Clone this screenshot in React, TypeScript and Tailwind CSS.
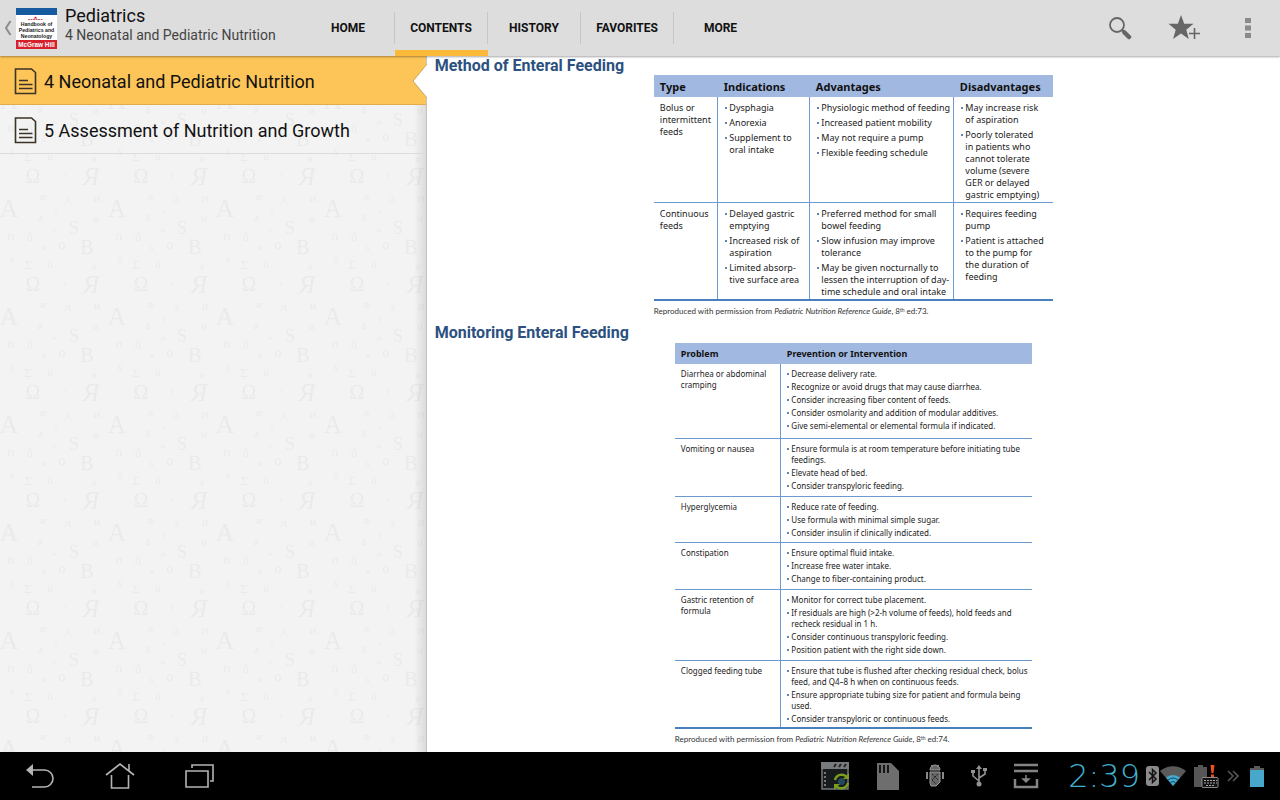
import type { ReactNode } from "react";

const tabs = ["HOME", "CONTENTS", "HISTORY", "FAVORITES", "MORE"];

const chapters = ["4 Neonatal and Pediatric Nutrition", "5 Assessment of Nutrition and Growth"];

const glyphs: [string, number, number, number][] = [
  ["A", 9, 61, 25],
  ["Ω", 33, 27, 20],
  ["Я", 91, 29, 25],
  ["B", 87, 98, 20],
  ["S", 74, 78, 18],
  ["Σ", 28, 113, 13],
  ["Σ", 28, 5, 13],
  ["æ", 43, 44, 11],
  ["д", 68, 46, 11],
  ["и", 97, 46, 13],
  ["ū", 50, 4, 11],
  ["ū", 50, 112, 11],
  ["o", 62, 93, 14],
  ["ŏ", 30, 85, 12],
  ["п", 11, 84, 13],
  ["a", 40, 65, 12],
  ["ж", 55, 76, 7],
  ["к", 44, 94, 8],
  ["и", 96, 66, 11],
  ["s", 12, 107, 12],
  ["я", 94, 6, 11],
  ["т", 56, 58, 8],
  ["г", 65, 22, 8],
];

const feedingMethods = [
  {
    type: ["Bolus or", "intermittent", "feeds"],
    cells: [
      [["Dysphagia"], ["Anorexia"], ["Supplement to", "oral intake"]],
      [
        ["Physiologic method of feeding"],
        ["Increased patient mobility"],
        ["May not require a pump"],
        ["Flexible feeding schedule"],
      ],
      [
        ["May increase risk", "of aspiration"],
        ["Poorly tolerated", "in patients who", "cannot tolerate", "volume (severe", "GER or delayed", "gastric emptying)"],
      ],
    ],
  },
  {
    type: ["Continuous", "feeds"],
    cells: [
      [
        ["Delayed gastric", "emptying"],
        ["Increased risk of", "aspiration"],
        ["Limited absorp-", "tive surface area"],
      ],
      [
        ["Preferred method for small", "bowel feeding"],
        ["Slow infusion may improve", "tolerance"],
        ["May be given nocturnally to", "lessen the interruption of day-", "time schedule and oral intake"],
      ],
      [
        ["Requires feeding", "pump"],
        ["Patient is attached", "to the pump for", "the duration of", "feeding"],
      ],
    ],
  },
];

const problems = [
  {
    height: "h-[74px]",
    name: ["Diarrhea or abdominal", "cramping"],
    steps: [
      ["Decrease delivery rate."],
      ["Recognize or avoid drugs that may cause diarrhea."],
      ["Consider increasing fiber content of feeds."],
      ["Consider osmolarity and addition of modular additives."],
      ["Give semi-elemental or elemental formula if indicated."],
    ],
  },
  {
    height: "h-[58px]",
    name: ["Vomiting or nausea"],
    steps: [
      ["Ensure formula is at room temperature before initiating tube", "feedings."],
      ["Elevate head of bed."],
      ["Consider transpyloric feeding."],
    ],
  },
  {
    height: "h-[46px]",
    name: ["Hyperglycemia"],
    steps: [
      ["Reduce rate of feeding."],
      ["Use formula with minimal simple sugar."],
      ["Consider insulin if clinically indicated."],
    ],
  },
  {
    height: "h-[47px]",
    name: ["Constipation"],
    steps: [["Ensure optimal fluid intake."], ["Increase free water intake."], ["Change to fiber-containing product."]],
  },
  {
    height: "h-[71px]",
    name: ["Gastric retention of", "formula"],
    steps: [
      ["Monitor for correct tube placement."],
      ["If residuals are high (>2-h volume of feeds), hold feeds and", "recheck residual in 1 h."],
      ["Consider continuous transpyloric feeding."],
      ["Position patient with the right side down."],
    ],
  },
  {
    height: "h-[68px]",
    name: ["Clogged feeding tube"],
    steps: [
      ["Ensure that tube is flushed after checking residual check, bolus", "feed, and Q4–8 h when on continuous feeds."],
      ["Ensure appropriate tubing size for patient and formula being", "used."],
      ["Consider transpyloric or continuous feeds."],
    ],
  },
];

function Lines({ lines }: { lines: string[] }) {
  return (
    <>
      {lines.map((line) => (
        <span key={line} className="block whitespace-nowrap">
          {line}
        </span>
      ))}
    </>
  );
}

function Bullets({ items, gap }: { items: string[][]; gap: string }) {
  return (
    <ul className={`flex flex-col ${gap}`}>
      {items.map((lines) => (
        <li key={lines[0]} className="flex gap-[2px]">
          <span className="mt-[5px] size-[2px] shrink-0 bg-[#5f82b4]" />
          <div>
            <Lines lines={lines} />
          </div>
        </li>
      ))}
    </ul>
  );
}

function Credit({ page }: { page: string }) {
  return (
    <p className="mt-1 font-[Lato,sans-serif] text-[8px] leading-[12px] text-[#333]">
      Reproduced with permission from <em>Pediatric Nutrition Reference Guide</em>, 8
      <sup className="text-[5px]">th</sup> ed:{page}.
    </p>
  );
}

function IconButton({ label, className, children }: { label: string; className: string; children: ReactNode }) {
  return (
    <button type="button" aria-label={label} className={`flex items-center justify-center ${className}`}>
      {children}
    </button>
  );
}

function BookCover() {
  return (
    <svg width="41" height="41" viewBox="0 0 41 41" role="img" aria-label="Handbook of Pediatrics and Neonatology">
      <rect width="41" height="41" fill="#fff" />
      <rect width="41" height="7" fill="#165a9f" />
      <rect y="32" width="41" height="9" fill="#d5212c" />
      <path d="M19.500 8.500l2 2h-4z" fill="#d5212c" />
      <path d="M12 11.500h15" stroke="#c4656a" strokeWidth="1" strokeDasharray="2 .5" />
      <g fontFamily="Liberation Sans, sans-serif" fontWeight="700" textAnchor="middle" fill="#222">
        <text x="20.500" y="18" fontSize="5.200">Handbook of</text>
        <text x="20.500" y="24" fontSize="5.200">Pediatrics and</text>
        <text x="20.500" y="30" fontSize="5.200">Neonatology</text>
        <text x="20.500" y="39" fontSize="6.400" fill="#fff">McGraw Hill</text>
      </g>
    </svg>
  );
}

function PageIcon() {
  return (
    <svg width="23" height="27" viewBox="0 0 23 27" fill="none" stroke="#3b3326" strokeWidth="1.600" className="shrink-0">
      <path d="M1.500 1H17.500L21.500 4.500v21H1.500z" />
      <path d="M5 12.500h9M5 16.500h13.500M5 20.500h13.500" />
    </svg>
  );
}

function Header() {
  return (
    <header className="relative z-10 flex h-14 shrink-0 bg-[#dddddd] shadow-[0_1px_2px_rgba(0,0,0,0.35)]">
      <div className="flex w-[302px] shrink-0 items-center">
        <IconButton label="Back" className="w-4">
          <svg width="8" height="16" viewBox="0 0 8 16" fill="none" stroke="#8c8c8c" strokeWidth="2">
            <path d="M6.500 1L2 8l4.500 7" />
          </svg>
        </IconButton>
        <BookCover />
        <div className="ml-2 pb-[6px] whitespace-nowrap">
          <h1 className="text-[18px] leading-[20px] text-[#111]">Pediatrics</h1>
          <p className="text-[14px] leading-[18px] text-[#444]">4 Neonatal and Pediatric Nutrition</p>
        </div>
      </div>
      <nav className="flex">
        {tabs.map((tab) => (
          <button
            key={tab}
            type="button"
            className={`flex w-[93px] items-center text-[12px] font-bold text-[#111] ${
              tab === "CONTENTS" ? "border-b-[6px] border-[#fbb93a] pt-[6px]" : ""
            }`}
          >
            <span
              className={`flex h-8 flex-1 items-center justify-center ${tab === "MORE" ? "" : "border-r border-[#c6c6c6]"}`}
            >
              {tab}
            </span>
          </button>
        ))}
      </nav>
      <div className="ml-auto flex">
        <IconButton label="Search" className="w-16">
          <svg width="24" height="24" viewBox="0 0 24 24" fill="none" stroke="#666">
            <circle cx="9" cy="9" r="7" strokeWidth="1.800" />
            <path d="M14 14l3 3" strokeWidth="2.500" />
            <path d="M16.500 16.500l4.500 4.500" strokeWidth="4.500" strokeLinecap="round" />
          </svg>
        </IconButton>
        <IconButton label="Add to favorites" className="w-16">
          <svg width="32" height="28" viewBox="0 0 32 28">
            <path d="M13 1l3.200 8.800h9.300l-7.200 5.900 2.500 9.300-7.800-5.500-7.900 5.500 2.600-9.300L.5 9.800h9.400z" fill="#666" />
            <path d="M26.500 14v10.500M21 19.500h11" stroke="#ddd" strokeWidth="4" />
            <path d="M26.500 14v11M21 19.500h11" stroke="#666" strokeWidth="1.600" />
          </svg>
        </IconButton>
        <IconButton label="More options" className="w-16">
          <svg width="6" height="20" viewBox="0 0 6 20" fill="#8a8a8a">
            <path d="M0 0h6v5H0zM0 7.500h6v5H0zM0 15h6v5H0z" />
          </svg>
        </IconButton>
      </div>
    </header>
  );
}

function Sidebar() {
  return (
    <aside className="relative w-1/3 shrink-0 border-r border-[#c4c4c4] bg-[#f3f3f3]">
      <svg aria-hidden="true" className="absolute inset-0 h-full w-full">
        <defs>
          <pattern id="letters" y="100" width="108" height="108" patternUnits="userSpaceOnUse">
            <g fontFamily="Liberation Serif, serif" textAnchor="middle" fill="#eaeaea">
              {glyphs.map(([glyph, x, y, size]) => (
                <text key={`${glyph}-${x}-${y}`} x={x} y={y} fontSize={size} fontStyle={glyph === "Я" ? "italic" : "normal"}>
                  {glyph}
                </text>
              ))}
            </g>
          </pattern>
        </defs>
        <rect width="100%" height="100%" fill="url(#letters)" />
      </svg>
      <div className="absolute inset-y-0 right-0 w-3 bg-linear-to-r from-transparent to-black/10" />
      <ul className="relative">
        {chapters.map((chapter, index) => (
          <li
            key={chapter}
            className={`relative h-[49px] border-b ${index === 0 ? "border-[#e0ad48] bg-[#fdc558]" : "border-[#dcdcdc]"}`}
          >
            <a
              href="#chapter"
              className="flex h-full items-center gap-[7px] pt-[2px] pl-[14px] text-[18px] whitespace-nowrap text-[#111]"
            >
              <PageIcon />
              {chapter}
            </a>
            {index === 0 && (
              <svg width="15" height="34" viewBox="0 0 15 34" className="absolute top-2 -right-px">
                <path d="M15 0L1 17l14 17z" fill="#fff" />
                <path d="M15 0L1 17l14 17" fill="none" stroke="#c9a45a" strokeWidth="1" />
              </svg>
            )}
          </li>
        ))}
      </ul>
    </aside>
  );
}

const headingClass = "pl-2 text-[16px] leading-[18px] font-bold text-[#2c5180]";

function Article() {
  return (
    <article className="min-w-0 flex-1 bg-white pt-px">
      <h2 className={headingClass}>Method of Enteral Feeding</h2>
      <div className="mx-auto w-[399px] font-['Noto_Sans','Open_Sans',sans-serif] text-[#222]">
        <table className="w-full table-fixed border-collapse border-b-2 border-[#4a7fbd] text-left text-[9px] leading-[12px]">
          <colgroup>
            <col className="w-[64px]" />
            <col className="w-[92px]" />
            <col className="w-[144px]" />
            <col />
          </colgroup>
          <thead className="bg-[#a1b8e0] text-[11px] text-[#111]">
            <tr className="h-[22px]">
              {["Type", "Indications", "Advantages", "Disadvantages"].map((title) => (
                <th key={title} className="pt-px pl-[6px] font-bold">
                  {title}
                </th>
              ))}
            </tr>
          </thead>
          <tbody>
            {feedingMethods.map((method) => (
              <tr key={method.type[0]} className="border-b border-[#6d9bd0] align-top last:border-b-0">
                <td className="pt-[5px] pl-[6px]">
                  <Lines lines={method.type} />
                </td>
                {method.cells.map((items) => (
                  <td key={items[0][0]} className="border-l border-[#6d9bd0] pt-[5px] pb-px pl-[7px]">
                    <Bullets items={items} gap="gap-[3px]" />
                  </td>
                ))}
              </tr>
            ))}
          </tbody>
        </table>
        <Credit page="73" />
      </div>
      <h2 className={`mt-[7px] ${headingClass}`}>Monitoring Enteral Feeding</h2>
      <div className="mx-auto mt-px w-[357px] font-['Noto_Sans','Open_Sans',sans-serif] text-[#222]">
        <table className="w-full table-fixed border-collapse border-b-2 border-[#4a7fbd] text-left text-[8px] leading-[11px]">
          <colgroup>
            <col className="w-[106px]" />
            <col />
          </colgroup>
          <thead className="bg-[#a1b8e0] text-[9px] text-[#111]">
            <tr className="h-[21px]">
              <th className="pl-[6px] font-bold">Problem</th>
              <th className="pl-[6px] font-bold">Prevention or Intervention</th>
            </tr>
          </thead>
          <tbody>
            {problems.map((problem) => (
              <tr
                key={problem.name[0]}
                className={`border-b border-[#6d9bd0] align-top last:border-b-0 ${problem.height}`}
              >
                <td className="pt-1 pl-[6px]">
                  <Lines lines={problem.name} />
                </td>
                <td className="border-l border-[#6d9bd0] pt-1 pl-[6px]">
                  <Bullets items={problem.steps} gap="gap-[2px]" />
                </td>
              </tr>
            ))}
          </tbody>
        </table>
        <Credit page="74" />
      </div>
    </article>
  );
}

function SystemBar() {
  return (
    <footer className="flex h-12 shrink-0 items-center bg-black">
      <div className="flex">
        <IconButton label="Back" className="w-20">
          <svg width="28" height="26" viewBox="0 0 28 26" fill="none" stroke="#b4b4b4" strokeWidth="1.600">
            <path d="M6 7h12.500a8.500 8.500 0 0 1 0 17H6" />
            <path d="M0 7l7-6v12z" fill="#b4b4b4" stroke="none" />
          </svg>
        </IconButton>
        <IconButton label="Home" className="w-20">
          <svg width="30" height="28" viewBox="0 0 30 28" fill="none" stroke="#b4b4b4" strokeWidth="1.600">
            <path d="M1 13L15 2l14 11M24 9V2M6.500 13v13h17V13" />
          </svg>
        </IconButton>
        <IconButton label="Recent apps" className="w-20">
          <svg width="30" height="26" viewBox="0 0 30 26" fill="none" stroke="#b4b4b4" strokeWidth="1.600">
            <path d="M1 8h22v16H1zM7 5V2h21v16h-3" />
          </svg>
        </IconButton>
      </div>
      <div className="ml-auto flex items-center">
        <div className="mr-[13px] flex items-center gap-[26px]">
          <svg width="29" height="28" viewBox="0 0 29 28">
            <rect x="1" y="1" width="26" height="26" fill="#181b1d" stroke="#74787a" strokeWidth="1.500" />
            <path d="M0 0h28v7H0z" fill="#777b7e" />
            <path d="M13 5l2-3M18 5l2-3M23 5l2-3" stroke="#222" strokeWidth="2" />
            <path d="M4 10v14" stroke="#777" strokeWidth="2" strokeDasharray="2 2" />
            <circle cx="20.500" cy="19.500" r="3.500" fill="#24485e" />
            <path d="M14 18a7 7 0 0 1 12-3M27 21a7 7 0 0 1-12 3" fill="none" stroke="#7a9e20" strokeWidth="2.500" />
            <path d="M28 11v6h-6zM13 28v-6h6z" fill="#7a9e20" />
          </svg>
          <svg width="23" height="27" viewBox="0 0 23 27">
            <path d="M1 0h14l8 8v19H1z" fill="#6e6e6e" />
            <path d="M4 2v8M8 2v8M12 2v8" stroke="#161616" strokeWidth="2" />
          </svg>
          <svg width="20" height="24" viewBox="0 0 20 24">
            <path d="M5 6a5 5 0 0 1 10 0zM5 8h10v10l-4 4H6l-1-3z" fill="#666" stroke="#999" strokeWidth="1" />
            <path d="M6 1l2 2M14 1l-2 2" stroke="#999" />
            <path d="M2 8v7M18 8v7" stroke="#888" strokeWidth="2" />
            <path d="M7 10l6 6M13 10l-6 6M7 16l4 4" stroke="#222" strokeDasharray="2 1" />
          </svg>
          <svg width="16" height="22" viewBox="0 0 16 22" fill="none" stroke="#929292" strokeWidth="1.600">
            <path d="M8 2v17M8 16L2 11V7M8 13l6-4V5" />
            <path d="M8 0l3 4H5zM0 5h4v3H0zM12 3h4v3h-4z" fill="#929292" stroke="none" />
            <circle cx="8" cy="19" r="2.500" fill="#929292" stroke="none" />
          </svg>
          <svg width="26" height="26" viewBox="0 0 26 26" fill="none" stroke="#858585" strokeWidth="2.500">
            <path d="M1 2h24M1 8h24M2 16v8h22v-8" />
            <path d="M13 12v4M13 19l-3-3h6z" fill="#858585" strokeWidth="1.500" />
          </svg>
        </div>
        <time className="w-[88px] text-right font-['DejaVu_Sans'] text-[32px] leading-[36px] font-extralight text-[#3fb2d2]">
          2:39
        </time>
        <div className="ml-[6px] flex items-center">
          <svg width="13" height="20" viewBox="0 0 13 20">
            <rect width="13" height="20" rx="3" fill="#8b8b8b" />
            <path d="M3 6l7 7-3.500 3.500v-13L10 7l-7 7" fill="none" stroke="#111" strokeWidth="1.500" />
          </svg>
          <svg width="26" height="20" viewBox="0 0 26 20" className="ml-px">
            <path d="M0 5a20 20 0 0 1 26 0L13 20z" fill="#5a5a5a" />
            <path d="M6 11.500a11 11 0 0 1 14 0L13 20z" fill="#42a9d0" />
            <path d="M8 14q5-4 10 0M10.500 16.500q2.500-2 5 0" fill="none" stroke="#144a60" />
          </svg>
          <svg width="25" height="23" viewBox="0 0 25 23" className="ml-2">
            <path d="M4 0h5v2h4v20H0V2h4z" fill="#565656" />
            <path d="M16.500 0h4l-1 8h-2zM17 9.500h3v3h-3z" fill="#f0501e" />
            <rect x="8" y="12.500" width="16" height="10" rx="1" fill="#111" stroke="#8a8a8a" />
            <path d="M10 15.500h13M10 18h13M12 20.500h9" stroke="#aaa" strokeDasharray="2 1" />
          </svg>
          <svg width="12" height="12" viewBox="0 0 12 12" fill="none" stroke="#555" strokeWidth="1.600" className="ml-2">
            <path d="M1 1l5 5-5 5M6 1l5 5-5 5" />
          </svg>
          <svg width="14" height="21" viewBox="0 0 14 21" className="mr-4 ml-[11px]">
            <path d="M4 0h6v2h4v3H0V2h4z" fill="#5a5a5a" />
            <path d="M0 4h14v17H0z" fill="#47a8cc" />
          </svg>
        </div>
      </div>
    </footer>
  );
}

export default function App() {
  return (
    <div className="flex min-h-screen flex-col bg-white font-[Roboto,'Noto_Sans',sans-serif]">
      <Header />
      <main className="flex flex-1">
        <Sidebar />
        <Article />
      </main>
      <SystemBar />
    </div>
  );
}
